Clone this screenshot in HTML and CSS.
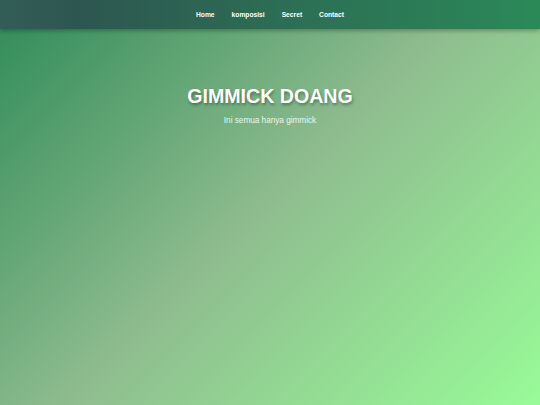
FILE: index.html
```html
<!DOCTYPE html>
<html lang="id">
<head>
<meta charset="utf-8">
<title>GIMMICK DOANG</title>
<link rel="stylesheet" href="styles.css">
</head>
<body>
<nav class="topnav">
  <ul class="nav-list">
    <li class="nav-item"><a class="nav-link" href="#">Home</a></li>
    <li class="nav-item"><a class="nav-link" href="#">komposisi</a></li>
    <li class="nav-item"><a class="nav-link" href="#">Secret</a></li>
    <li class="nav-item"><a class="nav-link" href="#">Contact</a></li>
  </ul>
</nav>
<header class="hero">
  <h1 class="hero-title">GIMMICK DOANG</h1>
  <p class="hero-sub">Ini semua hanya gimmick</p>
</header>
</body>
</html>
```

FILE: styles.css
```css
html {
  height: 100%;
}
body {
  margin: 0;
  min-height: 100%;
  font-family: "Liberation Sans", Arial, sans-serif;
  background: linear-gradient(135deg, #2e8b57 0%, #8fbc8f 50%, #98fb98 100%);
  background-attachment: fixed;
}
.topnav {
  position: relative;
  z-index: 2;
  height: 29px;
  background: linear-gradient(90deg, #325d56 0%, #2d5650 14%, #2c6f55 55%, #2b8958 100%);
  box-shadow: 0 2px 4px rgba(0, 0, 0, 0.28);
  display: flex;
  align-items: center;
  justify-content: center;
}
.nav-list {
  list-style: none;
  margin: 0;
  padding: 0;
  display: flex;
  align-items: center;
  gap: 17px;
  font-size: 6.7px;
  line-height: 8px;
}
.nav-item {
  display: block;
}
.nav-link {
  color: #ffffff;
  text-decoration: none;
  font-weight: bold;
}
.hero {
  text-align: center;
  padding-top: 54px;
}
.hero-title {
  margin: 0;
  color: #ffffff;
  font-size: 19.6px;
  font-weight: bold;
  line-height: 26px;
  text-shadow: 1px 2px 3px rgba(0, 0, 0, 0.35);
}
.hero-sub {
  margin: 6px 0 0;
  color: #f2f2f2;
  font-size: 8.2px;
  line-height: 12px;
}
```
